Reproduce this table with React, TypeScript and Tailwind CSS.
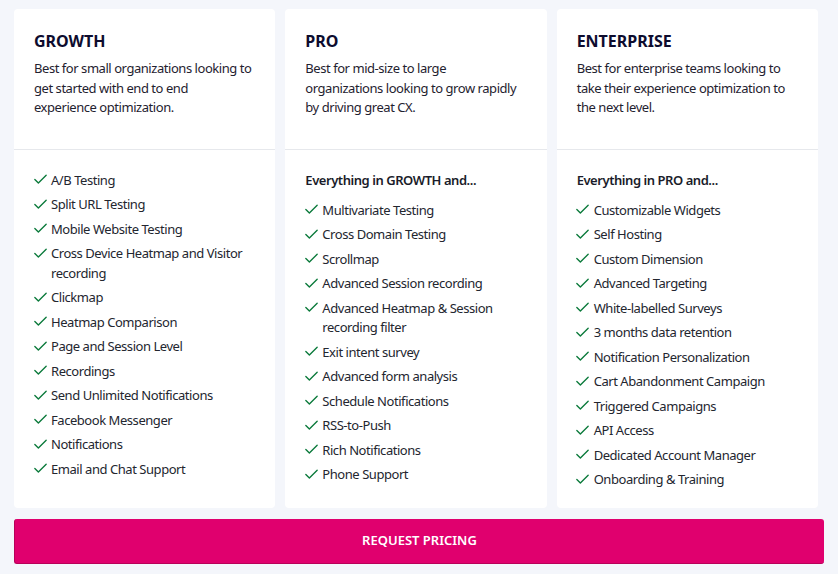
import { Check } from 'lucide-react';

type Plan = {
  name: string;
  desc: string;
  lead?: string;
  items: string[];
};

const plans: Plan[] = [
  {
    name: 'GROWTH',
    desc: 'Best for small organizations looking to get started with end to end experience optimization.',
    items: [
      'A/B Testing',
      'Split URL Testing',
      'Mobile Website Testing',
      'Cross Device Heatmap and Visitor recording',
      'Clickmap',
      'Heatmap Comparison',
      'Page and Session Level',
      'Recordings',
      'Send Unlimited Notifications',
      'Facebook Messenger',
      'Notifications',
      'Email and Chat Support',
    ],
  },
  {
    name: 'PRO',
    desc: 'Best for mid-size to large organizations looking to grow rapidly by driving great CX.',
    lead: 'Everything in GROWTH and...',
    items: [
      'Multivariate Testing',
      'Cross Domain Testing',
      'Scrollmap',
      'Advanced Session recording',
      'Advanced Heatmap & Session recording filter',
      'Exit intent survey',
      'Advanced form analysis',
      'Schedule Notifications',
      'RSS-to-Push',
      'Rich Notifications',
      'Phone Support',
    ],
  },
  {
    name: 'ENTERPRISE',
    desc: 'Best for enterprise teams looking to take their experience optimization to the next level.',
    lead: 'Everything in PRO and...',
    items: [
      'Customizable Widgets',
      'Self Hosting',
      'Custom Dimension',
      'Advanced Targeting',
      'White-labelled Surveys',
      '3 months data retention',
      'Notification Personalization',
      'Cart Abandonment Campaign',
      'Triggered Campaigns',
      'API Access',
      'Dedicated Account Manager',
      'Onboarding & Training',
    ],
  },
];

export default function App() {
  return (
    <div
      className="min-h-screen w-[838px] bg-[#f4f6fb] pt-[9px] pl-[14px] pr-[14px]"
      style={{ fontFamily: '"Noto Sans", sans-serif' }}
    >
      <div className="grid w-[804px] grid-cols-3 gap-[10px]">
        {plans.map((p) => (
          <div key={p.name} className="flex flex-col rounded-[4px] bg-white">
            <div className="border-b border-[#e6e8ec] px-5 pt-[21px] pb-[31px]">
              <h2 className="text-[16px] font-bold leading-[22px] text-[#0d0c2e]">{p.name}</h2>
              <p className="mt-[7px] pr-[3px] text-[13px] leading-[19.5px] tracking-[-0.45px] text-[#1f2230]">
                {p.desc}
              </p>
            </div>
            <div className="px-5 pt-[21px] pb-[18px]">
              {p.lead && (
                <div className="mb-[10.5px] text-[13px] font-semibold leading-[19.5px] tracking-[-0.45px] text-[#1a1c2a]">
                  {p.lead}
                </div>
              )}
              <ul className="flex flex-col gap-[5px]">
                {p.items.map((it) => (
                  <li
                    key={it}
                    className="flex items-start gap-[2.5px] text-[13px] leading-[19.5px] tracking-[-0.45px] text-[#23262f]"
                  >
                    <Check size={17} strokeWidth={1.9} className="-ml-[2.5px] mt-[0.5px] shrink-0 text-[#0b7a3b]" />
                    <span>{it}</span>
                  </li>
                ))}
              </ul>
            </div>
          </div>
        ))}
      </div>
      <button className="mt-[11px] h-[45px] w-[810px] rounded-[3px] border-b border-l border-[#b8005a] bg-[#e0006e] text-[13px] font-semibold text-white">
        REQUEST PRICING
      </button>
    </div>
  );
}
